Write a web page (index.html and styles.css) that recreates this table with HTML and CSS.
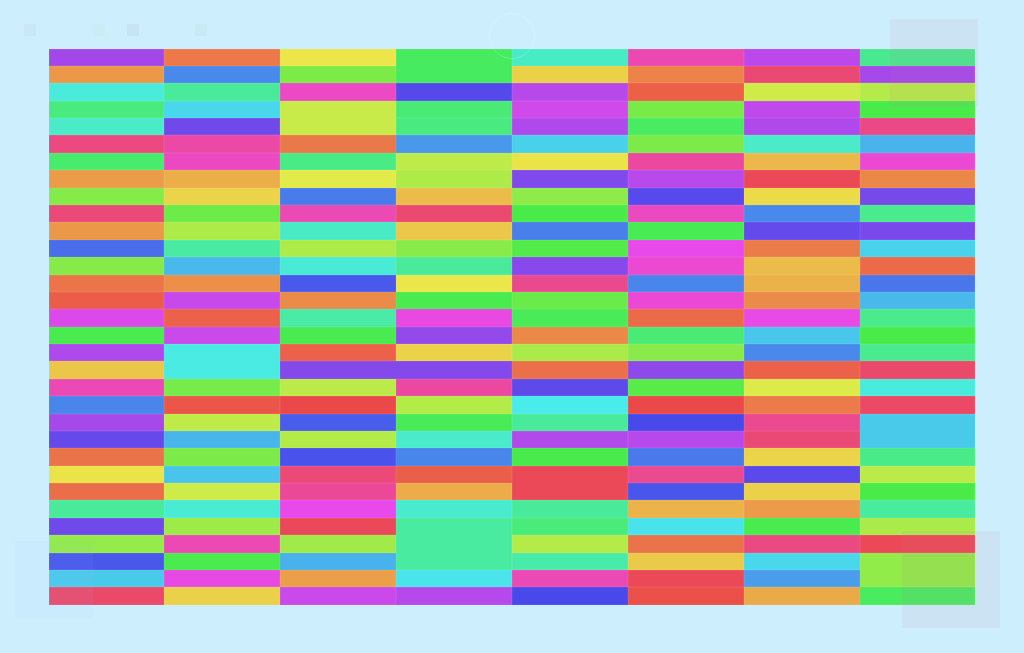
FILE: index.html
```html
<!DOCTYPE html>
<html>
<head>
<meta charset="utf-8">
<title>Grid</title>
<link rel="stylesheet" href="styles.css">
</head>
<body>
<header class="topbar">
  <span class="dot dot-a"></span>
  <span class="dot dot-b"></span>
  <span class="dot dot-c"></span>
  <span class="dot dot-d"></span>
</header>
<main class="board">
<div class="c" style="background:#a347eb"></div><div class="c" style="background:#ed7849"></div><div class="c" style="background:#ece64a"></div><div class="c rs2" style="background:#47eb5f"></div><div class="c" style="background:#47ebc4"></div><div class="c" style="background:#ec48b2"></div><div class="c" style="background:#bc48eb"></div><div class="c" style="background:#49e98f"></div>
<div class="c" style="background:#ed9849"></div><div class="c" style="background:#4989eb"></div><div class="c" style="background:#7ceb47"></div><div class="c" style="background:#ebd147"></div><div class="c" style="background:#ed8349"></div><div class="c" style="background:#ec4874"></div><div class="c" style="background:#a549eb"></div>
<div class="c" style="background:#49ebdc"></div><div class="c" style="background:#49eb9b"></div><div class="c" style="background:#ec49c4"></div><div class="c" style="background:#5549eb"></div><div class="c" style="background:#b749eb"></div><div class="c" style="background:#ec6047"></div><div class="c" style="background:#cfeb49"></div><div class="c" style="background:#b4eb49"></div>
<div class="c" style="background:#49eb7e"></div><div class="c" style="background:#49d8eb"></div><div class="c rs2" style="background:#c9eb49"></div><div class="c" style="background:#49eb76"></div><div class="c" style="background:#cf49eb"></div><div class="c" style="background:#79eb49"></div><div class="c" style="background:#c049eb"></div><div class="c" style="background:#49eb49"></div>
<div class="c" style="background:#49ebc9"></div><div class="c" style="background:#7049eb"></div><div class="c" style="background:#49eb80"></div><div class="c" style="background:#b049eb"></div><div class="c" style="background:#49eb62"></div><div class="c" style="background:#b049eb"></div><div class="c" style="background:#eb4985"></div>
<div class="c" style="background:#eb4980"></div><div class="c" style="background:#eb49a5"></div><div class="c" style="background:#eb7849"></div><div class="c" style="background:#4998eb"></div><div class="c" style="background:#49d1eb"></div><div class="c" style="background:#7ceb49"></div><div class="c" style="background:#49ebc8"></div><div class="c" style="background:#49b3eb"></div>
<div class="c" style="background:#49eb6c"></div><div class="c" style="background:#eb49c0"></div><div class="c" style="background:#49eb84"></div><div class="c" style="background:#beeb49"></div><div class="c" style="background:#ebe449"></div><div class="c" style="background:#eb49a0"></div><div class="c" style="background:#ebb849"></div><div class="c" style="background:#eb49d4"></div>
<div class="c" style="background:#eb9c49"></div><div class="c" style="background:#ebae49"></div><div class="c" style="background:#e2eb49"></div><div class="c" style="background:#aeeb49"></div><div class="c" style="background:#7f49eb"></div><div class="c" style="background:#b849eb"></div><div class="c" style="background:#eb4958"></div><div class="c" style="background:#eb8849"></div>
<div class="c" style="background:#85eb49"></div><div class="c" style="background:#ebd449"></div><div class="c" style="background:#497ceb"></div><div class="c" style="background:#ebbc49"></div><div class="c" style="background:#8eeb49"></div><div class="c" style="background:#5749eb"></div><div class="c" style="background:#ebdb49"></div><div class="c" style="background:#7649eb"></div>
<div class="c" style="background:#eb4977"></div><div class="c" style="background:#6deb49"></div><div class="c" style="background:#eb49b3"></div><div class="c" style="background:#eb4970"></div><div class="c" style="background:#49eb49"></div><div class="c" style="background:#eb49c0"></div><div class="c" style="background:#4989eb"></div><div class="c" style="background:#49eb8c"></div>
<div class="c" style="background:#eb9849"></div><div class="c" style="background:#adeb49"></div><div class="c" style="background:#49ebc5"></div><div class="c" style="background:#ebc849"></div><div class="c" style="background:#497feb"></div><div class="c" style="background:#49eb55"></div><div class="c" style="background:#6449eb"></div><div class="c" style="background:#7a49eb"></div>
<div class="c" style="background:#496deb"></div><div class="c" style="background:#49eba3"></div><div class="c" style="background:#adeb49"></div><div class="c" style="background:#89eb49"></div><div class="c" style="background:#52eb49"></div><div class="c" style="background:#e749eb"></div><div class="c" style="background:#eb7b49"></div><div class="c" style="background:#49d2eb"></div>
<div class="c" style="background:#86eb49"></div><div class="c" style="background:#49b8eb"></div><div class="c" style="background:#49ebd6"></div><div class="c" style="background:#49eb9b"></div><div class="c" style="background:#8749eb"></div><div class="c" style="background:#eb49d1"></div><div class="c" style="background:#ebbc49"></div><div class="c" style="background:#eb6b49"></div>
<div class="c" style="background:#eb7549"></div><div class="c" style="background:#eb8f49"></div><div class="c" style="background:#4959eb"></div><div class="c" style="background:#ebe649"></div><div class="c" style="background:#eb498e"></div><div class="c" style="background:#4986eb"></div><div class="c" style="background:#ebb249"></div><div class="c" style="background:#4977eb"></div>
<div class="c" style="background:#eb5c49"></div><div class="c" style="background:#c849eb"></div><div class="c" style="background:#eb8b49"></div><div class="c" style="background:#49eb4f"></div><div class="c" style="background:#6beb49"></div><div class="c" style="background:#eb49d5"></div><div class="c" style="background:#eb8b49"></div><div class="c" style="background:#49b8eb"></div>
<div class="c" style="background:#dc49eb"></div><div class="c" style="background:#eb6149"></div><div class="c" style="background:#49eba7"></div><div class="c" style="background:#e749e1"></div><div class="c" style="background:#49eb58"></div><div class="c" style="background:#eb6b49"></div><div class="c" style="background:#e949e5"></div><div class="c" style="background:#49eb8c"></div>
<div class="c" style="background:#49eb4f"></div><div class="c" style="background:#c949eb"></div><div class="c" style="background:#49eb4f"></div><div class="c" style="background:#9449eb"></div><div class="c" style="background:#eb8949"></div><div class="c" style="background:#49eb75"></div><div class="c" style="background:#49c6eb"></div><div class="c" style="background:#49eb49"></div>
<div class="c" style="background:#ae49eb"></div><div class="c rs2" style="background:#49ebe3"></div><div class="c" style="background:#eb6149"></div><div class="c" style="background:#ebd349"></div><div class="c" style="background:#abeb49"></div><div class="c" style="background:#88eb49"></div><div class="c" style="background:#4989eb"></div><div class="c" style="background:#49eb8e"></div>
<div class="c" style="background:#ebc749"></div><div class="c cs2" style="background:#8349eb"></div><div class="c" style="background:#eb6f49"></div><div class="c" style="background:#8e49eb"></div><div class="c" style="background:#eb6149"></div><div class="c" style="background:#eb4969"></div>
<div class="c" style="background:#eb49b3"></div><div class="c" style="background:#77eb49"></div><div class="c" style="background:#bbeb49"></div><div class="c" style="background:#eb499f"></div><div class="c" style="background:#5e49eb"></div><div class="c" style="background:#58eb49"></div><div class="c" style="background:#dceb49"></div><div class="c" style="background:#49ebdc"></div>
<div class="c" style="background:#4985eb"></div><div class="c" style="background:#eb5649"></div><div class="c" style="background:#eb4949"></div><div class="c" style="background:#b3eb49"></div><div class="c" style="background:#49ebeb"></div><div class="c" style="background:#eb4949"></div><div class="c" style="background:#eb7b49"></div><div class="c" style="background:#eb4966"></div>
<div class="c" style="background:#a549eb"></div><div class="c" style="background:#bfeb49"></div><div class="c" style="background:#495deb"></div><div class="c" style="background:#49eb58"></div><div class="c" style="background:#49eb9b"></div><div class="c" style="background:#4949eb"></div><div class="c" style="background:#eb4990"></div><div class="c rs2" style="background:#49caeb"></div>
<div class="c" style="background:#6649eb"></div><div class="c" style="background:#49b6eb"></div><div class="c" style="background:#b3eb49"></div><div class="c" style="background:#49ebca"></div><div class="c" style="background:#b149eb"></div><div class="c" style="background:#b749eb"></div><div class="c" style="background:#eb4975"></div>
<div class="c" style="background:#eb7349"></div><div class="c" style="background:#7ceb49"></div><div class="c" style="background:#4952eb"></div><div class="c" style="background:#4986eb"></div><div class="c" style="background:#49eb4c"></div><div class="c" style="background:#4979eb"></div><div class="c" style="background:#ebd449"></div><div class="c" style="background:#49eb88"></div>
<div class="c" style="background:#ebe449"></div><div class="c" style="background:#49c4eb"></div><div class="c" style="background:#eb4977"></div><div class="c" style="background:#eb5e49"></div><div class="c rs2" style="background:#eb4958"></div><div class="c" style="background:#eb4990"></div><div class="c" style="background:#5c49eb"></div><div class="c" style="background:#bbeb49"></div>
<div class="c" style="background:#eb6d49"></div><div class="c" style="background:#cdeb49"></div><div class="c" style="background:#eb4997"></div><div class="c" style="background:#ebac49"></div><div class="c" style="background:#4956eb"></div><div class="c" style="background:#ebd049"></div><div class="c" style="background:#49eb49"></div>
<div class="c" style="background:#49eb9a"></div><div class="c" style="background:#49ebd2"></div><div class="c" style="background:#e749eb"></div><div class="c" style="background:#49ebcf"></div><div class="c" style="background:#49eb9a"></div><div class="c" style="background:#ebb349"></div><div class="c" style="background:#eb9b49"></div><div class="c" style="background:#49eb9c"></div>
<div class="c" style="background:#7049eb"></div><div class="c" style="background:#9ceb49"></div><div class="c" style="background:#eb4959"></div><div class="c rs3" style="background:#49eba0"></div><div class="c" style="background:#49eb7a"></div><div class="c" style="background:#49e3eb"></div><div class="c" style="background:#49eb4f"></div><div class="c" style="background:#abeb49"></div>
<div class="c" style="background:#95eb49"></div><div class="c" style="background:#eb49b4"></div><div class="c" style="background:#a0eb49"></div><div class="c" style="background:#b5eb49"></div><div class="c" style="background:#eb7349"></div><div class="c" style="background:#eb4982"></div><div class="c" style="background:#eb4957"></div>
<div class="c" style="background:#4957eb"></div><div class="c" style="background:#49eb4f"></div><div class="c" style="background:#49b1eb"></div><div class="c" style="background:#49ebaa"></div><div class="c" style="background:#ebca49"></div><div class="c" style="background:#49d8eb"></div><div class="c rs2" style="background:#91eb49"></div>
<div class="c" style="background:#49caeb"></div><div class="c" style="background:#e749e3"></div><div class="c" style="background:#eb9f49"></div><div class="c" style="background:#49e5eb"></div><div class="c" style="background:#eb49b5"></div><div class="c" style="background:#eb4957"></div><div class="c" style="background:#499deb"></div>
<div class="c" style="background:#eb4969"></div><div class="c" style="background:#ebd049"></div><div class="c" style="background:#c949eb"></div><div class="c" style="background:#b649eb"></div><div class="c" style="background:#4949eb"></div><div class="c" style="background:#eb5149"></div><div class="c" style="background:#ebaa49"></div><div class="c" style="background:#49eb5f"></div>
</main>
<div class="ring"></div>
<div class="veil veil-tr"></div>
<div class="veil veil-bl"></div>
<div class="veil veil-br"></div>
</body>
</html>
```
FILE: styles.css
```css
html, body {
  margin: 0;
  padding: 0;
}
body {
  position: relative;
  width: 1024px;
  height: 653px;
  overflow: hidden;
  background: #cdeefd;
  font-family: "Liberation Sans", Arial, sans-serif;
}
.topbar {
  display: flex;
  align-items: flex-start;
  height: 48.6px;
  box-sizing: border-box;
  padding: 24px 0 0 24px;
}
.dot {
  display: block;
  width: 12px;
  height: 12px;
}
.dot-a { background: #c9e6fb; }
.dot-b { background: #cbecf5; margin-left: 57px; }
.dot-c { background: #c6e4f6; margin-left: 22px; }
.dot-d { background: #c9eaf4; margin-left: 56px; }

.board {
  display: grid;
  grid-template-columns: repeat(8, 1fr);
  grid-template-rows: repeat(32, 1fr);
  width: 926.8px;
  height: 556.2px;
  margin-left: 48.6px;
}
.c {
  box-shadow: inset 0 0 0 0.5px rgba(255, 255, 255, 0.12);
}
.rs2 { grid-row: span 2; }
.rs3 { grid-row: span 3; }
.cs2 { grid-column: span 2; }

.ring {
  position: absolute;
  left: 489px;
  top: 13px;
  width: 44px;
  height: 44px;
  border-radius: 50%;
  border: 1.5px solid rgba(255, 255, 255, 0.2);
}
.veil {
  position: absolute;
}
.veil-tr {
  left: 890px;
  top: 19px;
  width: 88px;
  height: 88px;
  background: rgba(205, 125, 160, 0.09);
}
.veil-bl {
  left: 15px;
  top: 541px;
  width: 78px;
  height: 77px;
  background: rgba(150, 200, 250, 0.07);
}
.veil-br {
  left: 902px;
  top: 531px;
  width: 98px;
  height: 97px;
  background: rgba(205, 125, 160, 0.09);
}
```
